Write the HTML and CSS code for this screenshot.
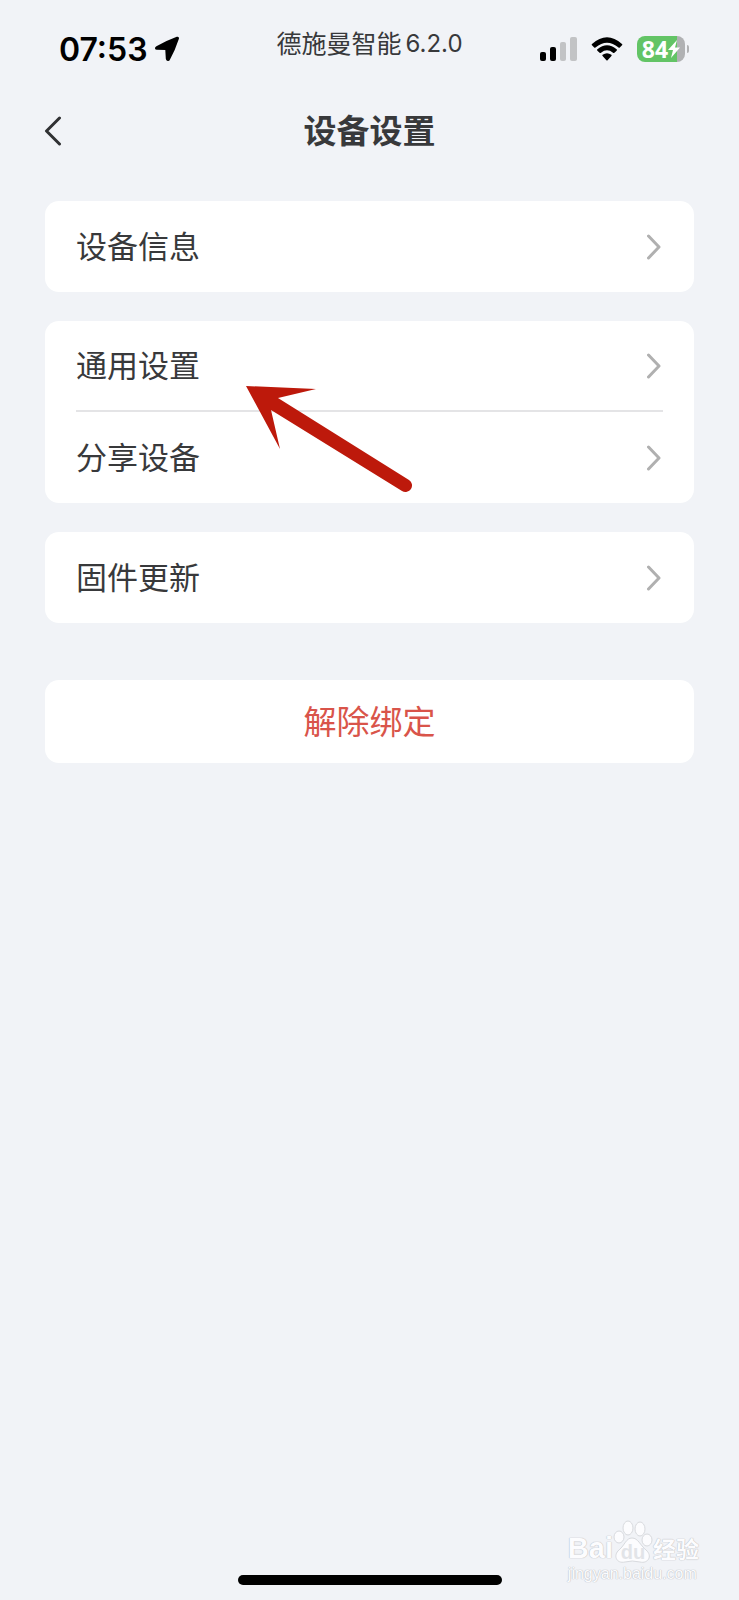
FILE: index.html
```html
<!DOCTYPE html>
<html lang="zh-CN">
<head>
<meta charset="utf-8">
<meta name="viewport" content="width=device-width, initial-scale=1">
<title>设备设置</title>
<link rel="stylesheet" href="styles.css">
</head>
<body>
<div class="screen">
  <div class="status">
    <div class="status-left">
      <time class="clock">07:53</time>
      <svg class="location" viewBox="0 0 26 26" aria-hidden="true"><path d="M25 2.400Q25.200 .3 22.800 .8Q11 5.200 2.400 10.200Q.8 11 1 12.400T2.800 13.800L11.300 14L11.800 22.700Q12 24.800 13.700 25T16 23.400Q21 14.500 25 2.400Z"/></svg>
    </div>
    <div class="carrier"><span class="carrier-name">德施曼智能</span><span>6.2.0</span></div>
    <div class="status-right">
      <svg class="signal" viewBox="0 0 37 24" aria-hidden="true"><rect x="0" y="15" width="6" height="9" rx="2"/><rect x="10" y="10" width="6" height="14" rx="2"/><g fill="#c2c3c5"><rect x="20" y="5" width="6" height="19" rx="2"/><rect x="30" y="0" width="7" height="24" rx="2"/></g></svg>
      <svg class="wifi" viewBox="0 0 32 24" aria-hidden="true"><path d="M1 7Q16-6.500 31 7Q31.600 7.700 31 8.300L28.800 10.500Q28.200 11 27.500 10.400Q16 .9 4.500 10.400Q3.800 11 3.200 10.500L1 8.300Q.4 7.700 1 7ZM6.400 12.300Q16 4.300 25.600 12.300Q26.300 13 25.600 13.700L23.400 15.700Q22.700 16.200 22 15.700Q16 11 10 15.700Q9.300 16.200 8.600 15.700L6.400 13.700Q5.700 13 6.400 12.300ZM11.600 17.700Q16 14.700 20.400 17.700Q21 18.200 20.400 18.900L16.600 23.200Q16 23.800 15.400 23.200L11.600 18.900Q11 18.200 11.600 17.700Z"/></svg>
      <div class="battery">
        <span class="battery-body"><span>84</span><svg class="bolt" viewBox="0 0 12 18" aria-hidden="true"><path d="M9 0L0 10H5L3 18L12 7.500H7Z"/></svg></span>
        <span class="battery-tip"></span>
      </div>
    </div>
  </div>

  <header class="header">
    <button class="back" type="button" aria-label="返回"><svg viewBox="0 0 18 30" aria-hidden="true"><path d="M15.500 2L2.500 15L15.500 28"/></svg></button>
    <h1 class="title">设备设置</h1>
  </header>

  <main class="content">
    <nav class="card"><a class="row" href="#info"><span>设备信息</span><svg class="chevron" viewBox="0 0 16 28" aria-hidden="true"><path d="M1.500 3L12 14L1.500 25"/></svg></a></nav>
    <nav class="card">
      <a class="row" href="#general"><span>通用设置</span><svg class="chevron" viewBox="0 0 16 28" aria-hidden="true"><path d="M1.500 3L12 14L1.500 25"/></svg></a>
      <a class="row" href="#share"><span>分享设备</span><svg class="chevron" viewBox="0 0 16 28" aria-hidden="true"><path d="M1.500 3L12 14L1.500 25"/></svg></a>
      <svg class="pointer" viewBox="0 0 168 108" aria-hidden="true"><path d="M0 0L70 3L32 12L163 94A6 6 0 0 1 156 105L25 24L34 63Z"/></svg>
    </nav>
    <nav class="card"><a class="row" href="#firmware"><span>固件更新</span><svg class="chevron" viewBox="0 0 16 28" aria-hidden="true"><path d="M1.500 3L12 14L1.500 25"/></svg></a></nav>
    <button class="unbind" type="button">解除绑定</button>
  </main>

  <div class="home-bar"></div>

  <div class="watermark">
    <div class="brand">
      <span class="brand-latin">Bai</span>
      <span class="paw"><svg viewBox="0 0 40 44" aria-hidden="true"><ellipse cx="6" cy="17" rx="5" ry="6"/><ellipse cx="15" cy="8" rx="5" ry="7"/><ellipse cx="27" cy="9" rx="5" ry="7"/><ellipse cx="34" cy="20" rx="5" ry="6"/><path d="M19 18C25 18 27 25 33 30C40 36 35 44 27 42Q19 40 12 42C3 44 0 35 6 30C12 25 13 18 19 18Z"/></svg><span class="paw-text">du</span></span>
      <span class="brand-cn">经验</span>
    </div>
    <div class="site">jingyan.baidu.com</div>
  </div>
</div>
</body>
</html>
```
FILE: styles.css
```css
* {
  box-sizing: border-box;
}

body {
  margin: 0;
  background: #f1f3f7;
  color: #38393b;
  font-family: Inter, "Noto Sans CJK SC", sans-serif;
}

button {
  border: 0;
  padding: 0;
  font: inherit;
  cursor: pointer;
}

svg {
  display: block;
}

.screen {
  position: relative;
  display: flex;
  flex-direction: column;
  min-height: 100vh;
}

.status {
  display: grid;
  grid-template-columns: 1fr auto 1fr;
  height: 98px;
  padding: 0 50px;
}

.status-left,
.status-right {
  display: flex;
  align-items: center;
  color: #000;
}

.status-left {
  gap: 6px;
  padding-left: 9px;
}

.clock {
  padding-top: 2px;
  font-size: 32px;
  font-weight: 600;
  line-height: 40px;
}

.location {
  width: 26px;
  height: 26px;
}

.carrier {
  display: flex;
  gap: 4px;
  align-self: start;
  padding-top: 28px;
  font-size: 24px;
  line-height: 32px;
}

.carrier-name {
  font-size: 25px;
}

.status-right {
  justify-content: flex-end;
  gap: 14px;
}

.signal {
  width: 37px;
  height: 24px;
}

.wifi {
  width: 32px;
  height: 24px;
}

.battery {
  display: flex;
  align-items: center;
  gap: 2px;
}

.battery-body {
  display: flex;
  align-items: center;
  justify-content: center;
  width: 48px;
  height: 26px;
  border-radius: 8px;
  background: linear-gradient(to right, #63c466 84%, #b0b1b3 84%);
  color: #fff;
  font-family: "Noto Sans", sans-serif;
  font-size: 23px;
  font-weight: 700;
  line-height: 26px;
}

.bolt {
  width: 12px;
  height: 18px;
  fill: #fff;
}

.battery-tip {
  width: 2px;
  height: 8px;
  border-radius: 0 2px 2px 0;
  background: #b0b1b3;
}

.header {
  display: grid;
  grid-template-columns: 1fr auto 1fr;
  align-items: center;
  height: 66px;
  padding: 0 44px;
}

.back {
  width: 18px;
  height: 30px;
  background: none;
}

.back path {
  fill: none;
  stroke: #303133;
  stroke-width: 3;
  stroke-linecap: round;
  stroke-linejoin: round;
}

.title {
  margin: 0;
  font-size: 33px;
  font-weight: 700;
  line-height: 40px;
}

.content {
  display: flex;
  flex-direction: column;
  gap: 29px;
  padding: 37px 45px;
}

.card {
  position: relative;
  border-radius: 14px;
  background: #fff;
}

.row {
  display: flex;
  align-items: center;
  justify-content: space-between;
  height: 91px;
  margin: 0 31px;
  color: inherit;
  font-size: 31px;
  line-height: 40px;
  text-decoration: none;
}

.row:has(+ .row) {
  border-bottom: 2px solid #e4e4e6;
}

.chevron {
  width: 16px;
  height: 28px;
}

.chevron path {
  fill: none;
  stroke: #b0b0b0;
  stroke-width: 3;
  stroke-linecap: round;
  stroke-linejoin: round;
}

.pointer {
  position: absolute;
  top: 65px;
  left: 201px;
  width: 168px;
  height: 108px;
  fill: #bd190b;
  pointer-events: none;
}

.unbind {
  height: 83px;
  margin-top: 28px;
  border-radius: 14px;
  background: #fff;
  color: #d9544a;
  font-size: 33px;
  line-height: 40px;
}

.home-bar {
  align-self: center;
  width: 264px;
  height: 10px;
  margin: auto 0 15px;
  border-radius: 5px;
  background: #000;
}

.watermark {
  position: absolute;
  right: 40px;
  bottom: 16px;
  color: #fcfcfe;
  font-family: "Liberation Sans", "Noto Sans CJK SC", sans-serif;
  text-shadow: 0 0 1px #b8babf, 0 0 1px #b8babf;
}

.brand {
  display: flex;
  align-items: flex-end;
  line-height: 32px;
}

.brand-latin {
  font-size: 29px;
  font-weight: 700;
}

.brand-cn {
  font-size: 23px;
  font-weight: 700;
  line-height: 28px;
}

.paw {
  position: relative;
}

.paw svg {
  width: 40px;
  height: 44px;
  fill: #fcfcfe;
  stroke: #d8dade;
}

.paw-text {
  position: absolute;
  inset: 16px 0 0;
  color: #e2e4e8;
  font-size: 20px;
  font-weight: 700;
  text-align: center;
  text-shadow: none;
}

.site {
  font-size: 16px;
  line-height: 20px;
}
```
